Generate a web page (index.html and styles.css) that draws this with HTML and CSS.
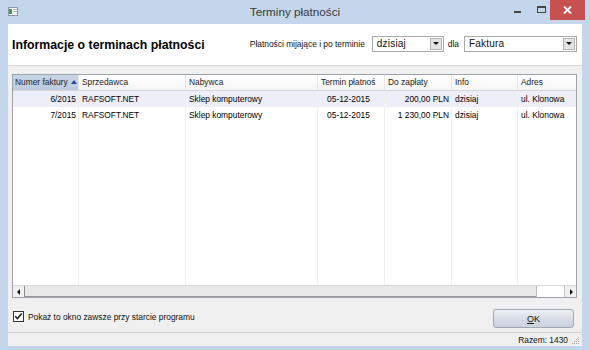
FILE: index.html
```html
<!DOCTYPE html>
<html lang="pl">
<head>
<meta charset="utf-8">
<title>Terminy płatności</title>
<link rel="stylesheet" href="styles.css">
</head>
<body>
<div class="window">
  <div class="titlebar">
    <div class="tb-left">
      <svg class="app-icon" width="10" height="9" viewBox="0 0 10 9">
        <rect x="0.5" y="0.5" width="9" height="8" fill="#f4f6f8" stroke="#8a9aa8"/>
        <rect x="1" y="2" width="3" height="5" fill="#3f9a4a"/>
        <rect x="5" y="2" width="4" height="1" fill="#b0bcc8"/>
        <rect x="5" y="4" width="4" height="1" fill="#b0bcc8"/>
      </svg>
    </div>
    <div class="tb-title">Terminy płatności</div>
    <div class="tb-right">
      <span class="ctl-min"></span>
      <span class="ctl-max"></span>
      <span class="ctl-close">
        <svg width="9" height="8" viewBox="0 0 9 8"><path d="M1 0.5 L8 7.5 M8 0.5 L1 7.5" stroke="#fff" stroke-width="1.8"/></svg>
      </span>
    </div>
  </div>
  <div class="client">
    <div class="header">
      <h1 class="heading">Informacje o terminach płatności</h1>
      <div class="filters">
        <span class="lbl">Płatności mijające i po terminie</span>
        <div class="combo combo-when"><span class="combo-text">dzisiaj</span><span class="drop"></span></div>
        <span class="lbl lbl-dla">dla</span>
        <div class="combo combo-doc"><span class="combo-text">Faktura</span><span class="drop"></span></div>
      </div>
    </div>
    <div class="list">
      <div class="table">
        <div class="row head">
          <div class="cell c1 sorted">Numer faktury <span class="sort-arrow"></span></div>
          <div class="cell c2">Sprzedawca</div>
          <div class="cell c3">Nabywca</div>
          <div class="cell c4">Termin płatnoś</div>
          <div class="cell c5">Do zapłaty</div>
          <div class="cell c6">Info</div>
          <div class="cell c7">Adres</div>
        </div>
        <div class="row item hot">
          <div class="cell c1 right">6/2015</div>
          <div class="cell c2">RAFSOFT.NET</div>
          <div class="cell c3">Sklep komputerowy</div>
          <div class="cell c4 center">05-12-2015</div>
          <div class="cell c5 right">200,00 PLN</div>
          <div class="cell c6">dzisiaj</div>
          <div class="cell c7">ul. Klonowa</div>
        </div>
        <div class="row item">
          <div class="cell c1 right">7/2015</div>
          <div class="cell c2">RAFSOFT.NET</div>
          <div class="cell c3">Sklep komputerowy</div>
          <div class="cell c4 center">05-12-2015</div>
          <div class="cell c5 right">1 230,00 PLN</div>
          <div class="cell c6">dzisiaj</div>
          <div class="cell c7">ul. Klonowa</div>
        </div>
        <div class="row filler">
          <div class="cell c1"></div>
          <div class="cell c2"></div>
          <div class="cell c3"></div>
          <div class="cell c4"></div>
          <div class="cell c5"></div>
          <div class="cell c6"></div>
          <div class="cell c7"></div>
        </div>
      </div>
      <div class="hscroll">
        <span class="arrow arrow-left"></span>
        <span class="thumb"></span>
        <span class="track"></span>
        <span class="arrow arrow-right"></span>
      </div>
    </div>
    <div class="footer">
      <label class="check">
        <span class="box">
          <svg width="9" height="9" viewBox="0 0 9 9"><path d="M1.2 4.2 L3.4 6.6 L7.8 1.4" fill="none" stroke="#222" stroke-width="1.6"/></svg>
        </span>
        <span class="check-label">Pokaż to okno zawsze przy starcie programu</span>
      </label>
      <button class="btn-ok"><span class="u">O</span>K</button>
    </div>
    <div class="status">
      <span class="status-text">Razem: 1430</span>
      <svg class="grip" width="8" height="8" viewBox="0 0 8 8">
        <rect x="6" y="0" width="1" height="1" fill="#a0a0a0"/>
        <rect x="4" y="2" width="1" height="1" fill="#a0a0a0"/>
        <rect x="6" y="2" width="1" height="1" fill="#a0a0a0"/>
        <rect x="2" y="4" width="1" height="1" fill="#a0a0a0"/>
        <rect x="4" y="4" width="1" height="1" fill="#a0a0a0"/>
        <rect x="6" y="4" width="1" height="1" fill="#a0a0a0"/>
        <rect x="0" y="6" width="1" height="1" fill="#a0a0a0"/>
        <rect x="2" y="6" width="1" height="1" fill="#a0a0a0"/>
        <rect x="4" y="6" width="1" height="1" fill="#a0a0a0"/>
        <rect x="6" y="6" width="1" height="1" fill="#a0a0a0"/>
      </svg>
    </div>
  </div>
</div>
</body>
</html>
```

FILE: styles.css
```css
* { box-sizing: border-box; }

html, body {
  margin: 0;
  padding: 0;
}

body {
  width: 590px;
  height: 350px;
  overflow: hidden;
  font-family: "Liberation Sans", Arial, sans-serif;
  font-size: 8.4px;
  color: #000;
  background: #c2d5eb;
}

.window {
  width: 590px;
  height: 350px;
  display: flex;
  flex-direction: column;
  background: #c3d6ec;
}

/* ---------- title bar ---------- */
.titlebar {
  height: 24px;
  display: grid;
  grid-template-columns: 1fr auto 1fr;
  align-items: start;
}

.tb-left {
  padding: 7px 0 0 8px;
  display: flex;
}

.tb-title {
  padding-top: 5px;
  font-size: 11.7px;
  color: #3a3a3a;
  white-space: nowrap;
}

.tb-right {
  display: flex;
  justify-content: flex-end;
  align-items: flex-start;
  padding-right: 5px;
}

.ctl-min {
  width: 7px;
  height: 2px;
  background: #444;
  margin-top: 11px;
  margin-right: 16px;
}

.ctl-max {
  width: 9px;
  height: 7px;
  border: 1px solid #444;
  border-top-width: 2px;
  margin-top: 6px;
  margin-right: 4px;
}

.ctl-close {
  width: 35px;
  height: 20px;
  background: #c75050;
  display: flex;
  align-items: center;
  justify-content: center;
}

/* ---------- client ---------- */
.client {
  margin: 0 8px;
  height: 322px;
  background: #f0f0f0;
  display: flex;
  flex-direction: column;
}

.header {
  height: 42px;
  background: #fff;
  border-bottom: 1px solid #d9d9d9;
  display: flex;
  align-items: center;
  justify-content: space-between;
  padding: 0 5px 1px 4px;
}

.heading {
  margin: 0;
  font-size: 12.3px;
  font-weight: bold;
  color: #000;
  white-space: nowrap;
  padding-top: 1px;
}

.filters {
  display: flex;
  align-items: center;
  margin-top: -1px;
}

.lbl {
  font-size: 8.4px;
  color: #111;
  white-space: nowrap;
}

.lbl-dla {
  margin: 0 5px 0 4px;
}

.combo {
  height: 16px;
  border: 1px solid #a9a9a9;
  background: #fff;
  display: flex;
  align-items: center;
  justify-content: space-between;
  padding: 0 1px 0 4px;
}

.combo-when {
  width: 72px;
  margin-left: 7px;
}

.combo-doc {
  width: 113px;
}

.combo-text {
  font-size: 10px;
  letter-spacing: 0.2px;
  color: #111;
}

.drop {
  width: 12px;
  height: 12px;
  background: #e3e3e3;
  border: 1px solid #b4b4b4;
  position: relative;
}

.drop::after {
  content: "";
  position: absolute;
  left: 2px;
  top: 3px;
  border-left: 3px solid transparent;
  border-right: 3px solid transparent;
  border-top: 3px solid #111;
}

/* ---------- list ---------- */
.list {
  margin: 8px 5px 0 4px;
  height: 224px;
  border: 1px solid #9ca3ab;
  background: #fff;
  display: flex;
  flex-direction: column;
  overflow: hidden;
}

.table {
  flex: 1;
  display: flex;
  flex-direction: column;
  min-height: 0;
}

.row {
  display: flex;
  height: 16px;
}

.row.filler {
  flex: 1;
  height: auto;
}

.cell {
  flex: none;
  border-right: 1px solid #f0f0f0;
  padding: 0 3px;
  white-space: nowrap;
  overflow: hidden;
  line-height: 16px;
}

.c1 { width: 66px; }
.c2 { width: 107px; }
.c3 { width: 132px; }
.c4 { width: 67px; }
.c5 { width: 67px; }
.c6 { width: 66px; }
.c7 { width: 80px; }

.right { text-align: right; padding-right: 2px; }
.center { text-align: center; padding-right: 8px; }

.head .cell {
  background: linear-gradient(#ffffff, #f5f5f5);
  border-right: 1px solid #e3e5e8;
  border-bottom: 1px solid #d5d5d5;
  color: #222;
  line-height: 15px;
}

.head .cell.sorted {
  background: linear-gradient(#c8d4e6, #bccbe0);
  padding-left: 2px;
}

.sort-arrow {
  display: inline-block;
  width: 0;
  height: 0;
  border-left: 3px solid transparent;
  border-right: 3px solid transparent;
  border-bottom: 4px solid #2a4aa0;
  margin-left: 1px;
  vertical-align: 1px;
}

.item.hot {
  background: #eeeef9;
}

.item .cell {
  color: #000;
}

/* ---------- scrollbar ---------- */
.hscroll {
  height: 12px;
  display: flex;
  border-top: 1px solid #d8d8d8;
  background: #f4f4f4;
}

.arrow {
  width: 12px;
  position: relative;
  background: #f0f0f0;
}

.arrow-left { border-right: 1px solid #8e8e8e; }

.arrow-left::after,
.arrow-right::after {
  content: "";
  position: absolute;
  top: 3px;
  border-top: 3px solid transparent;
  border-bottom: 3px solid transparent;
}

.arrow-left::after {
  left: 4px;
  border-right: 3px solid #111;
}

.arrow-right {
  border-left: 1px solid #c8c8c8;
}

.arrow-right::after {
  left: 5px;
  border-left: 3px solid #111;
}

.thumb {
  flex: 1;
  background: #e8e8e8;
  border-bottom: 1px solid #9a9a9a;
}

.track {
  width: 28px;
  background: #fff;
  border-left: 1px solid #b8b8b8;
}

/* ---------- footer ---------- */
.footer {
  margin-top: 11px;
  height: 19px;
  display: flex;
  align-items: center;
  justify-content: space-between;
  padding: 0 8px 0 5px;
}

.check {
  display: flex;
  align-items: center;
  gap: 4px;
  margin-top: -4px;
}

.box {
  width: 11px;
  height: 11px;
  border: 1px solid #333;
  background: #fff;
  display: flex;
  align-items: center;
  justify-content: center;
}

.check-label {
  font-size: 8.4px;
  color: #111;
}

.btn-ok {
  width: 81px;
  height: 19px;
  border: 1px solid #9ea8b6;
  border-radius: 3px;
  background: linear-gradient(#eef1f5, #d6dce5 55%, #cbd2dc);
  font-family: "Liberation Sans", Arial, sans-serif;
  font-size: 9px;
  color: #111;
  padding: 0;
}

.u { text-decoration: underline; }

/* ---------- status ---------- */
.status {
  margin-top: 4px;
  height: 14px;
  border-top: 1px solid #cfcfcf;
  display: flex;
  justify-content: flex-end;
  align-items: center;
  padding-right: 2px;
}

.status-text {
  font-size: 8.4px;
  color: #111;
  margin-right: 4px;
}

.grip {
  align-self: flex-end;
  margin-bottom: 1px;
}
```
